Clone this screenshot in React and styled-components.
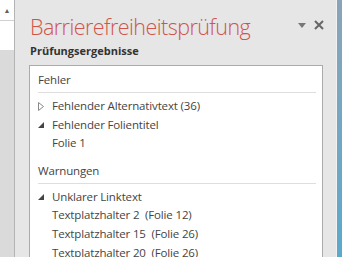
import React from "react";
import styled, { createGlobalStyle } from "styled-components";

const Global = createGlobalStyle`
  html, body { margin: 0; padding: 0; overflow: hidden; background: #e6e6e6; }
  #root { height: 257px; }
`;

const Page = styled.div`
  display: flex;
  height: 257px;
  width: 342px;
  font-family: "Open Sans", "Noto Sans", sans-serif;
`;

const ScrollBar = styled.div`
  width: 14px;
  border-right: 1px solid #b4b4b4;
  background: #dadada;
  display: flex;
  flex-direction: column;
`;

const ScrollTrack = styled.div`
  height: 50px;
  background: #fff;
`;

const ScrollButton = styled.div`
  height: 20px;
  border-bottom: 1px solid #d0d0d0;
  display: flex;
  align-items: center;
  justify-content: center;
  color: #606060;
  font-size: 7px;
`;

const Panel = styled.div`
  flex: 1;
  background: #e6e6e6;
  padding: 0 13px 0 14px;
  display: flex;
  flex-direction: column;
  min-width: 0;
`;

const Header = styled.div`
  display: flex;
  align-items: flex-start;
  height: 43px;
`;

const Title = styled.div`
  flex: 1;
  padding: 14px 0 0 1px;
  font-size: 21.5px;
  font-weight: 300;
  letter-spacing: -0.55px;
  color: #d0544a;
  line-height: 26px;
  white-space: nowrap;
`;

const Controls = styled.div`
  display: flex;
  align-items: center;
  gap: 8px;
  padding: 20px 0 0 0;
  margin-right: -1px;
`;

const SubTitle = styled.div`
  padding-left: 1px;
  font-size: 11px;
  font-weight: 700;
  color: #333;
  line-height: 16px;
  height: 22px;
`;

const ListBox = styled.div`
  flex: 1;
  background: #fff;
  border: 1px solid #ababab;
  border-bottom: none;
  padding: 4px 6px 0 8px;
  overflow: hidden;
`;

const Group = styled.div`
  font-size: 11.5px;
  letter-spacing: -0.15px;
  color: #444;
  line-height: 18px;
  padding: 1px 0 3px 0;
  border-bottom: 1px solid #dedede;
  margin-bottom: 4px;
`;

const Row = styled.div`
  display: flex;
  align-items: center;
  font-size: 11.5px;
  letter-spacing: -0.15px;
  color: #444;
  line-height: 18.6px;
  white-space: nowrap;
  padding-left: ${(p) => (p.$indent ? 14 : 0)}px;
  margin-bottom: ${(p) => (p.$gap ? 8 : 0)}px;
`;

const Toggle = styled.span`
  width: 14px;
  display: inline-flex;
  align-items: center;
`;

const RightEdge = styled.div`
  width: 5px;
  border-left: 1px solid #f2f2f2;
  background: linear-gradient(180deg, #8aa4b8 0%, #6fa7c4 60%, #5aa9cc 100%);
`;

const Open = () => (
  <svg width="6" height="6" viewBox="0 0 6 6"><path d="M6 0 L6 6 L0 6 Z" fill="#444" /></svg>
);
const Closed = () => (
  <svg width="6" height="9" viewBox="0 0 6 9"><path d="M0.5 0.5 L5.5 4.5 L0.5 8.5 Z" fill="none" stroke="#888" strokeWidth="1" /></svg>
);

export default function App() {
  return (
    <>
      <Global />
      <Page>
        <ScrollBar>
          <ScrollTrack>
            <ScrollButton>▲</ScrollButton>
          </ScrollTrack>
        </ScrollBar>
        <Panel>
          <Header>
            <Title>Barrierefreiheitsprüfung</Title>
            <Controls>
              <svg width="8" height="5" viewBox="0 0 8 5"><path d="M0 0 L8 0 L4 5 Z" fill="#777" /></svg>
              <svg width="10" height="10" viewBox="0 0 10 10"><path d="M1 1 L9 9 M9 1 L1 9" stroke="#666" strokeWidth="2" /></svg>
            </Controls>
          </Header>
          <SubTitle>Prüfungsergebnisse</SubTitle>
          <ListBox>
            <Group>Fehler</Group>
            <Row><Toggle><Closed /></Toggle>Fehlender Alternativtext (36)</Row>
            <Row><Toggle><Open /></Toggle>Fehlender Folientitel</Row>
            <Row $indent $gap>Folie 1</Row>
            <Group>Warnungen</Group>
            <Row><Toggle><Open /></Toggle>Unklarer Linktext</Row>
            <Row $indent>Textplatzhalter 2&nbsp;&nbsp;(Folie 12)</Row>
            <Row $indent>Textplatzhalter 15&nbsp;&nbsp;(Folie 26)</Row>
            <Row $indent>Textplatzhalter 20&nbsp;&nbsp;(Folie 26)</Row>
          </ListBox>
        </Panel>
        <RightEdge />
      </Page>
    </>
  );
}
